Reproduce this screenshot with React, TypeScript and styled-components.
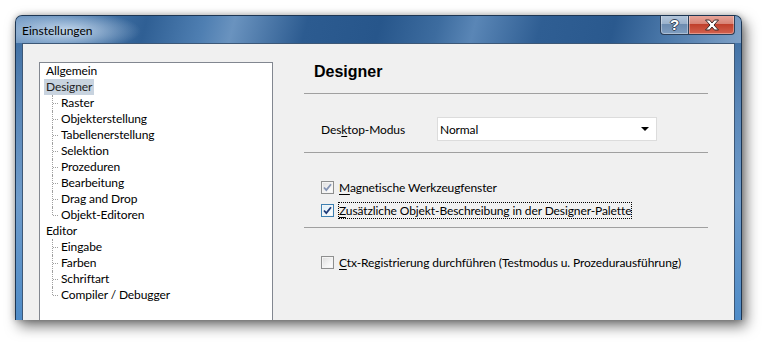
import React from "react";
import styled, { createGlobalStyle, css } from "styled-components";

const Global = createGlobalStyle`
  html, body { margin: 0; padding: 0; background: #ffffff; }
  body { width: 766px; height: 344px; overflow: hidden; }
  * { box-sizing: border-box; }
`;

const UI_FONT = `"Segoe UI", Lato, "Noto Sans", sans-serif`;

const Stage = styled.div`
  width: 766px;
  height: 344px;
  padding: 15px 0 0 15px;
  background: #ffffff;
`;

const Window = styled.div`
  width: 727px;
  height: 305px;
  display: flex;
  flex-direction: column;
  padding: 0 6px;
  border: 1px solid #1d3653;
  border-bottom: none;
  border-radius: 7px 7px 0 0;
  overflow: hidden;
  background: linear-gradient(180deg, #3a6a9e 0%, #5a87b8 30%, #6f9ccb 60%, #4f8cc8 100%);
  box-shadow: 4px 6px 14px rgba(0, 0, 0, 0.55), 0 0 6px rgba(0, 0, 0, 0.25);
`;

const TitleBar = styled.div`
  height: 27px;
  margin: 0 -6px;
  padding: 0 6px 0 6px;
  display: flex;
  align-items: flex-start;
  justify-content: space-between;
  background:
    radial-gradient(ellipse 75px 20px at 50px 15px, rgba(210, 226, 243, 0.9), rgba(210, 226, 243, 0) 100%),
    linear-gradient(105deg,
      #6f97c2 0%, #4f7eb0 8%, #2f5f94 18%, #4f7fb2 26%, #6a93bf 30%,
      #2c5b90 40%, #27568b 50%, #3d6c9f 58%, #5a86b6 63%, #2f5e93 72%,
      #2a598e 82%, #4d7aab 90%, #7fa1c7 100%);
`;

const TitleText = styled.span`
  margin-top: 7px;
  font-family: ${UI_FONT};
  font-size: 12px;
  line-height: 16px;
  color: #000000;
`;

const CaptionButtons = styled.div`
  display: flex;
  margin-top: -1px;
`;

const CapButton = styled.div<{ $kind: "help" | "close" }>`
  height: 20px;
  display: flex;
  align-items: center;
  justify-content: center;
  border: 1px solid #2c3e57;
  border-top: none;
  box-shadow: inset 0 0 0 1px rgba(255, 255, 255, 0.35);
  ${(p) =>
    p.$kind === "help"
      ? css`
          width: 28px;
          border-radius: 0 0 0 4px;
          border-right: none;
          background: linear-gradient(180deg, #b6c8dc 0%, #9bb2cc 45%, #6d8cb0 50%, #7f9dc0 100%);
        `
      : css`
          width: 47px;
          border-radius: 0 0 4px 0;
          background: linear-gradient(180deg, #e9a99e 0%, #d88476 45%, #c0402c 50%, #d3624f 100%);
        `}
`;

const HelpGlyph = styled.span`
  font-family: "Liberation Sans", Arial, sans-serif;
  font-weight: bold;
  font-size: 15px;
  line-height: 15px;
  color: #ffffff;
  text-shadow: -1px 0 #34445a, 1px 0 #34445a, 0 -1px #34445a, 0 1px #34445a;
`;

const Client = styled.div`
  flex: 1;
  display: flex;
  align-items: stretch;
  padding: 18px 0 0 16px;
  background: #f0f0f0;
  border: 1px solid #3d5877;
  border-bottom: none;
  font-family: ${UI_FONT};
  font-size: 12px;
  letter-spacing: -0.1px;
  color: #000000;
`;

const Tree = styled.div`
  width: 234px;
  background: #ffffff;
  border: 1px solid #828790;
  border-bottom: none;
  padding: 0 0 0 4px;
  display: flex;
  flex-direction: column;
`;

const TreeRow = styled.div<{ $child?: boolean; $last?: boolean }>`
  position: relative;
  height: 16px;
  display: flex;
  align-items: center;
  padding-left: ${(p) => (p.$child ? 15 : 0)}px;
  ${(p) =>
    p.$child &&
    css`
      &::before {
        content: "";
        position: absolute;
        left: 8px;
        top: 0;
        height: ${p.$last ? 8 : 16}px;
        border-left: 1px dotted #a0a0a0;
      }
      &::after {
        content: "";
        position: absolute;
        left: 9px;
        top: 8px;
        width: 5px;
        border-top: 1px dotted #a0a0a0;
      }
    `}
`;

const TreeLabel = styled.span<{ $selected?: boolean }>`
  height: 16px;
  line-height: 16px;
  padding: 0 2px;
  white-space: nowrap;
  background: ${(p) => (p.$selected ? "#c8d3df" : "transparent")};
  color: ${(p) => (p.$selected ? "#222222" : "#000000")};
`;

const Pane = styled.div`
  width: 404px;
  margin-left: 31px;
  display: flex;
  flex-direction: column;
`;

const Heading = styled.div`
  font-family: "Liberation Sans", Arial, sans-serif;
  font-weight: bold;
  font-size: 16px;
  line-height: 20px;
  letter-spacing: 0;
  padding-left: 10px;
  color: #000000;
`;

const Separator = styled.div<{ $top: number }>`
  height: 1px;
  background: #a0a0a0;
  margin-top: ${(p) => p.$top}px;
`;

const FieldRow = styled.div`
  margin-top: 23px;
  display: flex;
  align-items: center;
  padding-left: 17px;
`;

const FieldLabel = styled.span`
  width: 116px;
`;

const Select = styled.div`
  width: 220px;
  height: 24px;
  background: #ffffff;
  border: 1px solid #dcdcdc;
  display: flex;
  align-items: center;
  justify-content: space-between;
  padding: 0 7px 0 2px;
`;

const Arrow = styled.span`
  width: 0;
  height: 0;
  border-left: 4px solid transparent;
  border-right: 4px solid transparent;
  border-top: 4px solid #000000;
`;

const CheckRow = styled.div<{ $top: number }>`
  margin-top: ${(p) => p.$top}px;
  height: 17px;
  display: flex;
  align-items: center;
  padding-left: 17px;
  gap: 4px;
`;

const Box = styled.span<{ $hot?: boolean }>`
  width: 13px;
  height: 13px;
  flex: none;
  border: 1px solid ${(p) => (p.$hot ? "#3c7fb1" : "#8e8f8f")};
  background: ${(p) =>
    p.$hot
      ? "linear-gradient(135deg, #d8ecf9 0%, #ffffff 100%)"
      : "linear-gradient(135deg, #dcdcdc 0%, #f4f4f4 60%, #ffffff 100%)"};
  box-shadow: inset 0 0 0 1px #f4f4f4;
  display: flex;
  align-items: center;
  justify-content: center;
`;

const CheckLabel = styled.span<{ $focus?: boolean }>`
  line-height: 15px;
  padding: 0;
  border: 1px dotted ${(p) => (p.$focus ? "#000000" : "transparent")};
  white-space: nowrap;
`;

const Key = styled.span`
  text-decoration: underline;
  text-underline-offset: 2px;
`;

function Tick({ color }: { color: string }) {
  return (
    <svg width="9" height="9" viewBox="0 0 9 9">
      <path d="M1 4.5 L3.3 7 L8 1.2" fill="none" stroke={color} strokeWidth="1.8" />
    </svg>
  );
}

function CloseX() {
  return (
    <svg width="16" height="12" viewBox="0 0 16 12">
      <path
        d="M1.5 1 L5.5 1 L8 4 L10.5 1 L14.5 1 L10 6 L14.5 11 L10.5 11 L8 8 L5.5 11 L1.5 11 L6 6 Z"
        fill="#ffffff"
        stroke="#3b2a2a"
        strokeWidth="1"
        strokeLinejoin="round"
      />
    </svg>
  );
}

type Node = { label: string; selected?: boolean; children?: string[] };

const tree: Node[] = [
  { label: "Allgemein" },
  {
    label: "Designer",
    selected: true,
    children: [
      "Raster",
      "Objekterstellung",
      "Tabellenerstellung",
      "Selektion",
      "Prozeduren",
      "Bearbeitung",
      "Drag and Drop",
      "Objekt-Editoren",
    ],
  },
  {
    label: "Editor",
    children: ["Eingabe", "Farben", "Schriftart", "Compiler / Debugger"],
  },
];

export default function App() {
  return (
    <>
      <Global />
      <Stage>
        <Window>
          <TitleBar>
            <TitleText>Einstellungen</TitleText>
            <CaptionButtons>
              <CapButton $kind="help">
                <HelpGlyph>?</HelpGlyph>
              </CapButton>
              <CapButton $kind="close">
                <CloseX />
              </CapButton>
            </CaptionButtons>
          </TitleBar>
          <Client>
            <Tree>
              {tree.map((n) => (
                <React.Fragment key={n.label}>
                  <TreeRow>
                    <TreeLabel $selected={n.selected}>{n.label}</TreeLabel>
                  </TreeRow>
                  {n.children?.map((c, i) => (
                    <TreeRow key={c} $child $last={i === n.children!.length - 1}>
                      <TreeLabel>{c}</TreeLabel>
                    </TreeRow>
                  ))}
                </React.Fragment>
              ))}
            </Tree>
            <Pane>
              <Heading>Designer</Heading>
              <Separator $top={11} />
              <FieldRow>
                <FieldLabel>
                  Des<Key>k</Key>top-Modus
                </FieldLabel>
                <Select>
                  <span>Normal</span>
                  <Arrow />
                </Select>
              </FieldRow>
              <Separator $top={11} />
              <CheckRow $top={26}>
                <Box>
                  <Tick color="#8494b4" />
                </Box>
                <CheckLabel>
                  <Key>M</Key>agnetische Werkzeugfenster
                </CheckLabel>
              </CheckRow>
              <CheckRow $top={6}>
                <Box $hot>
                  <Tick color="#1f3a78" />
                </Box>
                <CheckLabel $focus>
                  <Key>Z</Key>usätzliche Objekt-Beschreibung in der Designer-Palette
                </CheckLabel>
              </CheckRow>
              <Separator $top={8} />
              <CheckRow $top={26}>
                <Box />
                <CheckLabel>
                  <Key>C</Key>tx-Registrierung durchführen (Testmodus u. Prozedurausführung)
                </CheckLabel>
              </CheckRow>
            </Pane>
          </Client>
        </Window>
      </Stage>
    </>
  );
}
